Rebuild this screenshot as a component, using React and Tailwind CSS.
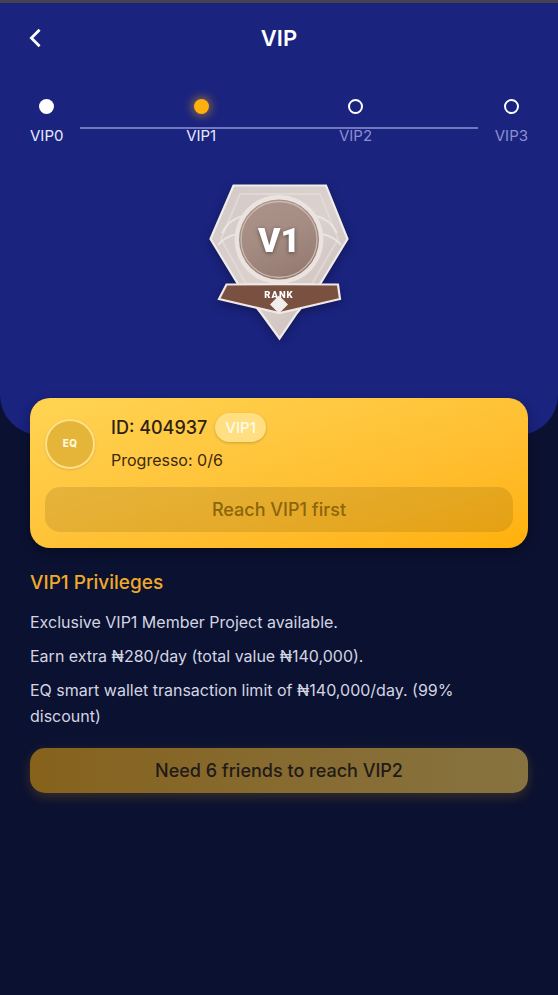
import React from "react";

const levels = [
  { name: "VIP0", state: "done" },
  { name: "VIP1", state: "current" },
  { name: "VIP2", state: "locked" },
  { name: "VIP3", state: "locked" },
];

const privileges = [
  "Exclusive VIP1 Member Project available.",
  "Earn extra ₦280/day (total value ₦140,000).",
  "EQ smart wallet transaction limit of ₦140,000/day. (99% discount)",
];

const dotStyles = {
  done: "bg-white",
  current: "bg-[#ffb00c] shadow-[0_0_10px_2px_rgba(255,176,12,0.5)]",
  locked: "border-2 border-white",
};

function Header() {
  return (
    <header className="relative flex h-[70px] items-center justify-center">
      <button type="button" aria-label="Back" className="absolute left-6 text-white">
        <svg width="24" height="24" viewBox="0 0 24 24" fill="none" stroke="currentColor" strokeWidth="2.8">
          <path d="M15.6 3.8 7.4 12l8.2 8.2" />
        </svg>
      </button>
      <h1 className="text-[22px] font-semibold text-white">VIP</h1>
    </header>
  );
}

function Levels() {
  return (
    <div className="relative px-[30px] pt-[26px]">
      <ol className="flex justify-between">
        {levels.map((level) => (
          <li key={level.name} className="flex flex-col items-center gap-[10px]">
            <span className={`size-[15px] rounded-full ${dotStyles[level.state]}`} />
            <span
              className={`text-[15px] leading-6 ${level.state === "locked" ? "text-[#8c90d0]" : "text-[#e8eafc]"}`}
            >
              {level.name}
            </span>
          </li>
        ))}
      </ol>
      <div className="absolute inset-x-20 bottom-[19px] h-[2px] bg-[#7277c1]" />
    </div>
  );
}

function RankBadge() {
  return (
    <svg
      className="mx-auto mt-[22px] drop-shadow-[0_3px_5px_rgba(0,0,0,0.3)]"
      width="160"
      height="180"
      viewBox="-1 0 160 180"
      role="img"
      aria-label="V1 rank"
    >
      <defs>
        <linearGradient id="shield" x1="0" y1="0" x2="1" y2="1">
          <stop offset="0" stopColor="#d3c9c7" />
          <stop offset="0.5" stopColor="#dbd1cd" />
          <stop offset="1" stopColor="#c7bbb7" />
        </linearGradient>
        <linearGradient id="medal" x1="0.2" y1="0" x2="0.6" y2="1">
          <stop offset="0" stopColor="#ab938b" />
          <stop offset="0.5" stopColor="#a48c83" />
          <stop offset="1" stopColor="#957a70" />
        </linearGradient>
      </defs>

      {/* shield */}
      <path
        d="M33.5 15.5H126L147.5 69 120 114 97 143 79.5 168.5 61 143 38 114 10.5 69Z"
        fill="url(#shield)"
        stroke="#f1ecec"
        strokeWidth="2.2"
      />
      <path d="M40 24H120L138 69 112 114H46L21 69Z" fill="none" stroke="#e6dedb" strokeWidth="2" opacity="0.65" />
      <g fill="none" stroke="#efebe9" strokeWidth="2" opacity="0.75">
        <path d="M22 63Q29 49 43 46" />
        <path d="M18 75Q24 67 37 64" />
        <path d="M137 63Q130 49 116 46" />
        <path d="M141 75Q135 67 122 64" />
      </g>

      {/* medal */}
      <circle cx="79" cy="69.5" r="44.5" fill="#ebe3df" />
      <circle cx="79" cy="69.5" r="40" fill="url(#medal)" />
      <circle cx="79" cy="69.5" r="38" fill="none" stroke="#c9b9b1" strokeWidth="1.3" />
      <text
        x="79"
        y="81.5"
        textAnchor="middle"
        fontSize="34"
        className="fill-white font-['Roboto',sans-serif] font-black drop-shadow-[0_1px_2px_rgba(0,0,0,0.45)]"
      >
        V1
      </text>

      {/* ribbon */}
      <path
        d="M26.5 114.5Q79 114 138 114.5L140 129 79.5 143 19 129Z"
        fill="#7a5041"
        stroke="#efe8e7"
        strokeWidth="2.2"
      />
      <text
        x="79"
        y="127.5"
        textAnchor="middle"
        fontSize="9.5"
        letterSpacing="1"
        className="fill-white font-['Roboto',sans-serif] font-black"
      >
        RANK
      </text>
      <path d="m79 125.5 9 9-9 9-9-9Z" fill="#f2ecea" />
    </svg>
  );
}

function MemberCard() {
  return (
    <section className="relative mx-[30px] -mt-[37px] rounded-[20px] bg-linear-to-br from-[#ffd452] to-[#ffb106] px-[15px] pt-[15px] pb-4 shadow-[0_4px_12px_rgba(0,0,0,0.3)]">
      <div className="flex items-center gap-4">
        <div className="flex size-[50px] shrink-0 items-center justify-center rounded-full border-2 border-[#ffe087] bg-[#e5b53a] text-[10px] font-extrabold tracking-wide text-[#fff8dc] shadow-sm">
          EQ
        </div>
        <div>
          <div className="flex items-center gap-2">
            <span className="text-lg font-medium text-[#2e2112]">ID: 404937</span>
            <span className="rounded-full bg-[#ffdf82] px-[10px] text-[15px] leading-[29px] font-medium text-[#fffbe8] shadow-[0_1px_3px_rgba(0,0,0,0.2)]">
              VIP1
            </span>
          </div>
          <p className="mt-1 text-[16px] leading-7 text-[#3b2810]">Progresso: 0/6</p>
        </div>
      </div>
      <button
        type="button"
        disabled
        className="mt-[13px] h-[45px] w-full rounded-[15px] bg-black/10 text-lg font-medium text-[#8b650b]"
      >
        Reach VIP1 first
      </button>
    </section>
  );
}

export default function App() {
  return (
    <main className="min-h-screen border-t-3 border-[#43444f] bg-[#0b1130] font-['Inter',sans-serif]">
      <div className="rounded-b-[40px] bg-[#1a237e] pb-[85px]">
        <Header />
        <Levels />
        <RankBadge />
      </div>

      <MemberCard />

      <section className="px-[30px] pt-[21px] pb-10">
        <h2 className="text-[19px] leading-7 font-medium text-[#f0a92b]">VIP1 Privileges</h2>
        <ul className="mt-3 flex flex-col gap-2 text-[16px] leading-[26px] text-[#d3d5e2]">
          {privileges.map((item) => (
            <li key={item}>{item}</li>
          ))}
        </ul>
        <button
          type="button"
          disabled
          className="mt-[19px] h-[45px] w-full rounded-[15px] bg-linear-to-r from-[#86621b] to-[#877340] text-lg font-medium text-[#211a19] shadow-[0_4px_12px_rgba(255,176,12,0.18)]"
        >
          Need 6 friends to reach VIP2
        </button>
      </section>
    </main>
  );
}
